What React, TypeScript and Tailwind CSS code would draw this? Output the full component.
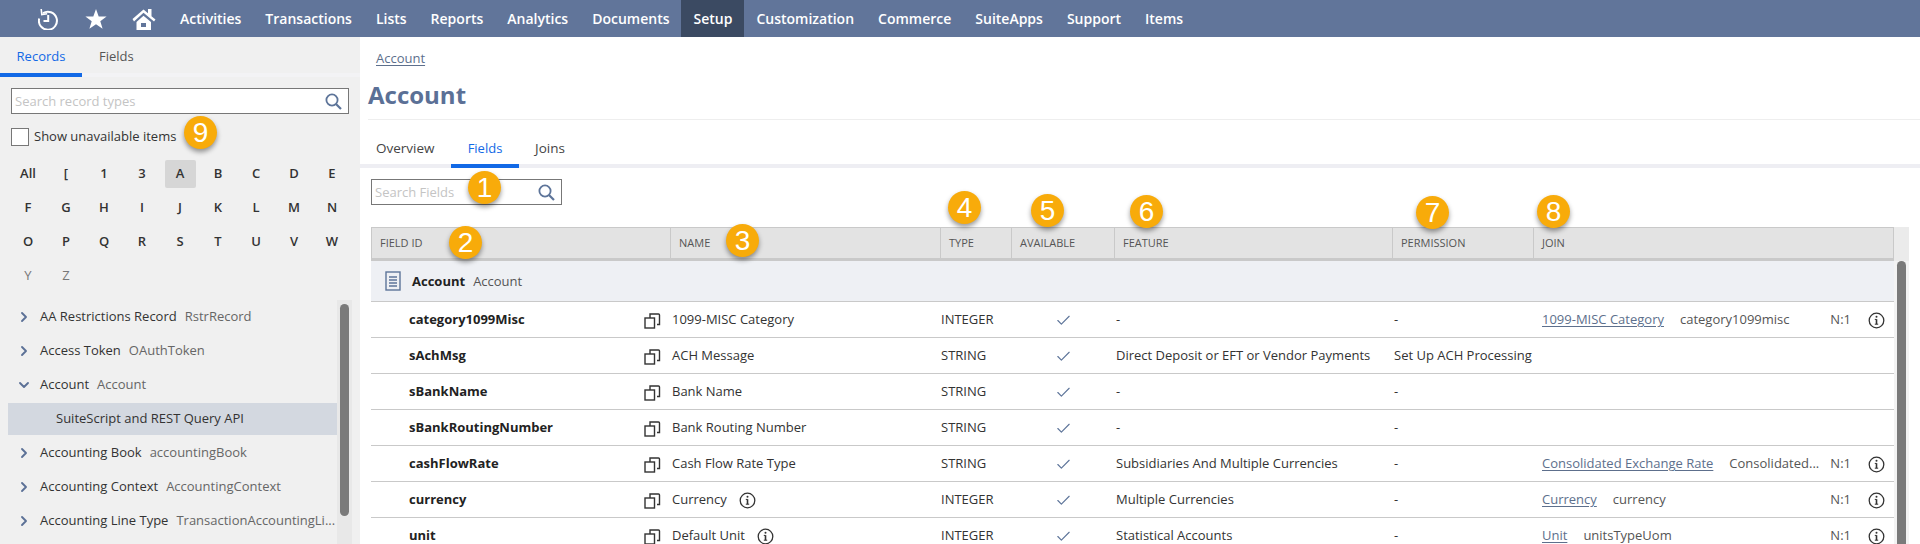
import { ChevronRight, ChevronDown, Check } from "lucide-react"

const navItems = ["Activities", "Transactions", "Lists", "Reports", "Analytics", "Documents", "Setup", "Customization", "Commerce", "SuiteApps", "Support", "Items"]

const letters = ["All", "[", "1", "3", "A", "B", "C", "D", "E", "F", "G", "H", "I", "J", "K", "L", "M", "N", "O", "P", "Q", "R", "S", "T", "U", "V", "W", "Y", "Z"]

const rows = [
  { id: "category1099Misc", name: "1099-MISC Category", type: "INTEGER", feature: "-", permission: "-", join: "1099-MISC Category", alias: "category1099misc" },
  { id: "sAchMsg", name: "ACH Message", type: "STRING", feature: "Direct Deposit or EFT or Vendor Payments", permission: "Set Up ACH Processing" },
  { id: "sBankName", name: "Bank Name", type: "STRING", feature: "-", permission: "-" },
  { id: "sBankRoutingNumber", name: "Bank Routing Number", type: "STRING", feature: "-", permission: "-" },
  { id: "cashFlowRate", name: "Cash Flow Rate Type", type: "STRING", feature: "Subsidiaries And Multiple Currencies", permission: "-", join: "Consolidated Exchange Rate", alias: "Consolidated..." },
  { id: "currency", name: "Currency", info: true, type: "INTEGER", feature: "Multiple Currencies", permission: "-", join: "Currency", alias: "currency" },
  { id: "unit", name: "Default Unit", info: true, type: "INTEGER", feature: "Statistical Accounts", permission: "-", join: "Unit", alias: "unitsTypeUom" },
]

const columns = ["FIELD ID", "NAME", "TYPE", "AVAILABLE", "FEATURE", "PERMISSION", "JOIN"]

function SearchIcon() {
  return (
    <svg width="17" height="17" viewBox="0 0 17 17" fill="none" stroke="#5d7499" strokeWidth="1.8">
      <circle cx="7" cy="7" r="5.6" />
      <path d="M11 11l5 5" strokeWidth="2.2" />
    </svg>
  )
}

function CopyIcon() {
  return (
    <svg width="17" height="17" viewBox="0 0 17 17" fill="none" stroke="#333" strokeWidth="1.4" className="shrink-0">
      <rect x="1" y="6" width="9.5" height="10" />
      <path d="M6 6V2h8.500a1 1 0 0 1 1 1v9.500h-2.500" />
    </svg>
  )
}

function InfoIcon() {
  return (
    <svg width="17" height="17" viewBox="0 0 17 17" fill="none" stroke="#333" className="shrink-0">
      <circle cx="8.5" cy="8.5" r="7.3" strokeWidth="1.3" />
      <path d="M8.5 7.2v5" strokeWidth="1.6" />
      <path d="M6.8 7.4h1.7M6.8 12.2h3.4" strokeWidth="1" />
      <circle cx="8.5" cy="4.8" r="1" fill="#333" stroke="none" />
    </svg>
  )
}

function Badge({ n, className }: { n: number; className: string }) {
  return (
    <div className={`absolute flex h-[33px] w-[33px] items-center justify-center rounded-full bg-[#f8ab0a] font-['Liberation_Sans',sans-serif] text-[28px] text-white shadow-[0_3px_5px_rgba(0,0,0,0.4)] ${className}`}>
      {n}
    </div>
  )
}

function ListRow({ name, id, open }: { name: string; id: string; open?: boolean }) {
  return (
    <div className="flex h-[34px] items-center whitespace-nowrap">
      <span className="flex w-[40px] justify-center pl-[8px]">
        {open ? <ChevronDown size={16} strokeWidth={2.8} color="#5b7096" /> : <ChevronRight size={16} strokeWidth={2.8} color="#5b7096" />}
      </span>
      <span>{name}</span>
      <span className="ml-[8px] text-[#666]">{id}</span>
    </div>
  )
}

export default function App() {
  return (
    <div className="relative h-[544px] w-[1920px] overflow-hidden bg-white font-['Open_Sans',sans-serif] text-[13px] text-[#333]">
      {/* Top nav */}
      <div className="flex h-[37px] bg-[#61759a] text-white">
        <div className="flex w-[168px] items-center pl-[38px]">
          <svg width="20" height="22" viewBox="0 0 20 22" fill="none" stroke="white" strokeWidth="2">
            <path d="M5 5.2A9 9 0 1 1 1.2 10.5" />
            <path d="M3.2 1l.6 5.6 5.4-.8" strokeWidth="1.6" />
            <path d="M10.2 7v6H5.500" />
          </svg>
          <svg width="22" height="22" viewBox="0 0 22 22" fill="white" className="ml-[27px]">
            <path d="M11 1l2.7 7.4H21.6l-6.3 4.8 2.3 7.6L11 16.200l-6.600 4.600 2.300-7.600L.4 8.400h7.900z" />
          </svg>
          <svg width="24" height="22" viewBox="0 0 24 22" fill="white" className="ml-[25px]">
            <path d="M.5 11 11.500 1.500 16 5.300V1h3.500v7.300L23.500 11.500 22 13.500 11.500 4.800 2 13.500z" />
            <path d="M4.500 14 11.500 7.700 19 14V22H4.500zM9 15v4h5v-4z" fillRule="evenodd" />
          </svg>
        </div>
        {navItems.map((item) => (
          <div key={item} className={`flex items-center px-[12px] text-[14px] font-semibold ${item === "Setup" ? "bg-[#3b4a62]" : ""}`}>
            {item}
          </div>
        ))}
      </div>

      <div className="flex h-[507px]">
        {/* Sidebar */}
        <aside className="flex w-[360px] shrink-0 flex-col bg-[#f0f0f0]">
          <div className="flex h-[40px] shrink-0 border-b-4 border-[#f3f3f5]">
            <div className="-mb-[4px] flex w-[82px] items-center justify-center border-b-4 border-[#1269e6] pt-[4px] font-medium text-[#1269e6]">Records</div>
            <div className="flex items-center pl-[17px] pt-[4px] font-medium text-[#555]">Fields</div>
          </div>
          <div className="mx-[11px] mt-[11px] flex h-[26px] w-[338px] shrink-0 items-center justify-between border border-[#777] bg-white pl-[3px] pr-[6px]">
            <span className="pt-px text-[#c4c4c4]">Search record types</span>
            <SearchIcon />
          </div>
          <div className="ml-[11px] mt-[14px] flex h-[18px] shrink-0 items-center gap-[5px]">
            <div className="h-[18px] w-[18px] border border-[#777] bg-white" />
            <span>Show unavailable items</span>
          </div>
          <div className="ml-[9px] mt-[11px] grid shrink-0 auto-rows-[34px] grid-cols-[repeat(9,38px)] font-semibold text-[#333]">
            {letters.map((l) => (
              <div key={l} className="flex items-center justify-center">
                <div className={`flex h-[28px] w-[31px] items-center justify-center rounded-[2px] ${l === "A" ? "bg-[#d6d6d6]" : ""} ${l === "Y" || l === "Z" ? "font-normal text-[#777]" : ""}`}>
                  {l}
                </div>
              </div>
            ))}
          </div>
          <div className="mt-[7px] flex min-h-0 flex-1">
            <div className="w-[337px]">
              <ListRow name="AA Restrictions Record" id="RstrRecord" />
              <ListRow name="Access Token" id="OAuthToken" />
              <ListRow name="Account" id="Account" open />
              <div className="mb-px ml-[8px] mt-px flex h-[32px] items-center bg-[#d3d8e0] pl-[48px]">SuiteScript and REST Query API</div>
              <ListRow name="Accounting Book" id="accountingBook" />
              <ListRow name="Accounting Context" id="AccountingContext" />
              <ListRow name="Accounting Line Type" id="TransactionAccountingLi..." />
            </div>
            <div className="h-full w-[15px] bg-[#e8e8e8] pl-[3px] pt-[4px]">
              <div className="h-[212px] w-[9px] rounded-full bg-[#7a7a7a]" />
            </div>
          </div>
        </aside>

        {/* Main */}
        <main className="min-w-0 flex-1">
          <div className="ml-[16px] mt-[12px] h-[18px] leading-[18px] text-[#5d6f8c] underline underline-offset-2">Account</div>
          <div className="ml-[8px] mt-[12px] flex h-[41px] items-start border-b border-[#eee]">
            <h1 className="text-[24px] font-bold leading-[32px] text-[#5b7096]">Account</h1>
          </div>
          <div className="mt-[16px] flex h-[32px] border-b-4 border-[#eeeef3]">
            <div className="flex w-[91px] items-center pb-[3px] pl-[16px] text-[13.5px] text-[#444]">Overview</div>
            <div className="-mb-[4px] flex w-[68px] items-center justify-center border-b-4 border-[#1269e6] pb-[3px] font-medium text-[#1269e6]">Fields</div>
            <div className="flex items-center pb-[3px] pl-[16px] text-[13.5px] text-[#444]">Joins</div>
          </div>
          <div className="ml-[11px] mt-[11px] flex h-[26px] w-[191px] items-center justify-between border border-[#777] pl-[3px] pr-[6px]">
            <span className="pt-px text-[#c4c4c4]">Search Fields</span>
            <SearchIcon />
          </div>

          <div className="ml-[11px] mt-[22px] flex">
            <div className="w-[1523px]">
              <div className="grid h-[34px] grid-cols-[298px_270px_71px_103px_278px_141px_360px] border border-b-[3px] border-[#c9c9c9] bg-[#e3e3e3]">
                {columns.map((c, i) => (
                  <div key={c} className={`flex items-center pl-[8px] pt-px text-[11px] font-medium text-[#555] ${i > 0 ? "border-l border-[#c9c9c9]" : ""}`}>
                    {c}
                  </div>
                ))}
              </div>
              <div className="flex h-[41px] items-center border-b border-[#c9c9c9] bg-[#eef0f4] pl-[14px]">
                <svg width="16" height="20" viewBox="0 0 16 20" fill="none" stroke="#5d7499" strokeWidth="1.400">
                  <rect x="1" y="1" width="14" height="18" />
                  <path d="M4 6h8M4 9h8M4 12h8M4 15h8" />
                </svg>
                <span className="ml-[11px] pt-px font-bold text-[#222]">Account</span>
                <span className="ml-[8px] pt-px text-[#555]">Account</span>
              </div>
              {rows.map((r) => (
                <div key={r.id} className="grid h-[36px] grid-cols-[299px_270px_71px_103px_278px_141px_361px] items-center border-b border-[#c9c9c9] pt-px">
                  <div className="flex items-center justify-between pl-[38px] pr-[9px]">
                    <span className="font-bold text-[#222]">{r.id}</span>
                    <CopyIcon />
                  </div>
                  <div className="flex items-center pl-[2px]">
                    {r.name}
                    {r.info && <span className="ml-[12px]"><InfoIcon /></span>}
                  </div>
                  <div className="pl-[1px]">{r.type}</div>
                  <div className="flex justify-center pl-[1px]"><Check size={17} strokeWidth={1.6} color="#5d7499" /></div>
                  <div className="pl-[2px]">{r.feature}</div>
                  <div className="whitespace-nowrap pl-[2px]">{r.permission}</div>
                  <div className="flex items-center pl-[9px] pr-[9px]">
                    {r.join && (
                      <>
                        <span className="text-[#5d6f8c] underline underline-offset-2">{r.join}</span>
                        <span className="ml-[16px] text-[#555]">{r.alias}</span>
                        <span className="ml-auto mr-[17px] text-[#555]">N:1</span>
                        <InfoIcon />
                      </>
                    )}
                  </div>
                </div>
              ))}
            </div>
            <div className="w-[15px] bg-[#f3f3f3]">
              <div className="h-[34px] bg-[#ebebeb]" />
              <div className="ml-[3px] h-[300px] w-[9px] rounded-t-full bg-[#7a7a7a]" />
            </div>
          </div>
        </main>
      </div>

      <Badge n={1} className="left-[468px] top-[171px]" />
      <Badge n={2} className="left-[449px] top-[226px]" />
      <Badge n={3} className="left-[726px] top-[224px]" />
      <Badge n={4} className="left-[948px] top-[191px]" />
      <Badge n={5} className="left-[1031px] top-[194px]" />
      <Badge n={6} className="left-[1130px] top-[195px]" />
      <Badge n={7} className="left-[1416px] top-[196px]" />
      <Badge n={8} className="left-[1537px] top-[195px]" />
      <Badge n={9} className="left-[184px] top-[116px]" />
    </div>
  )
}
